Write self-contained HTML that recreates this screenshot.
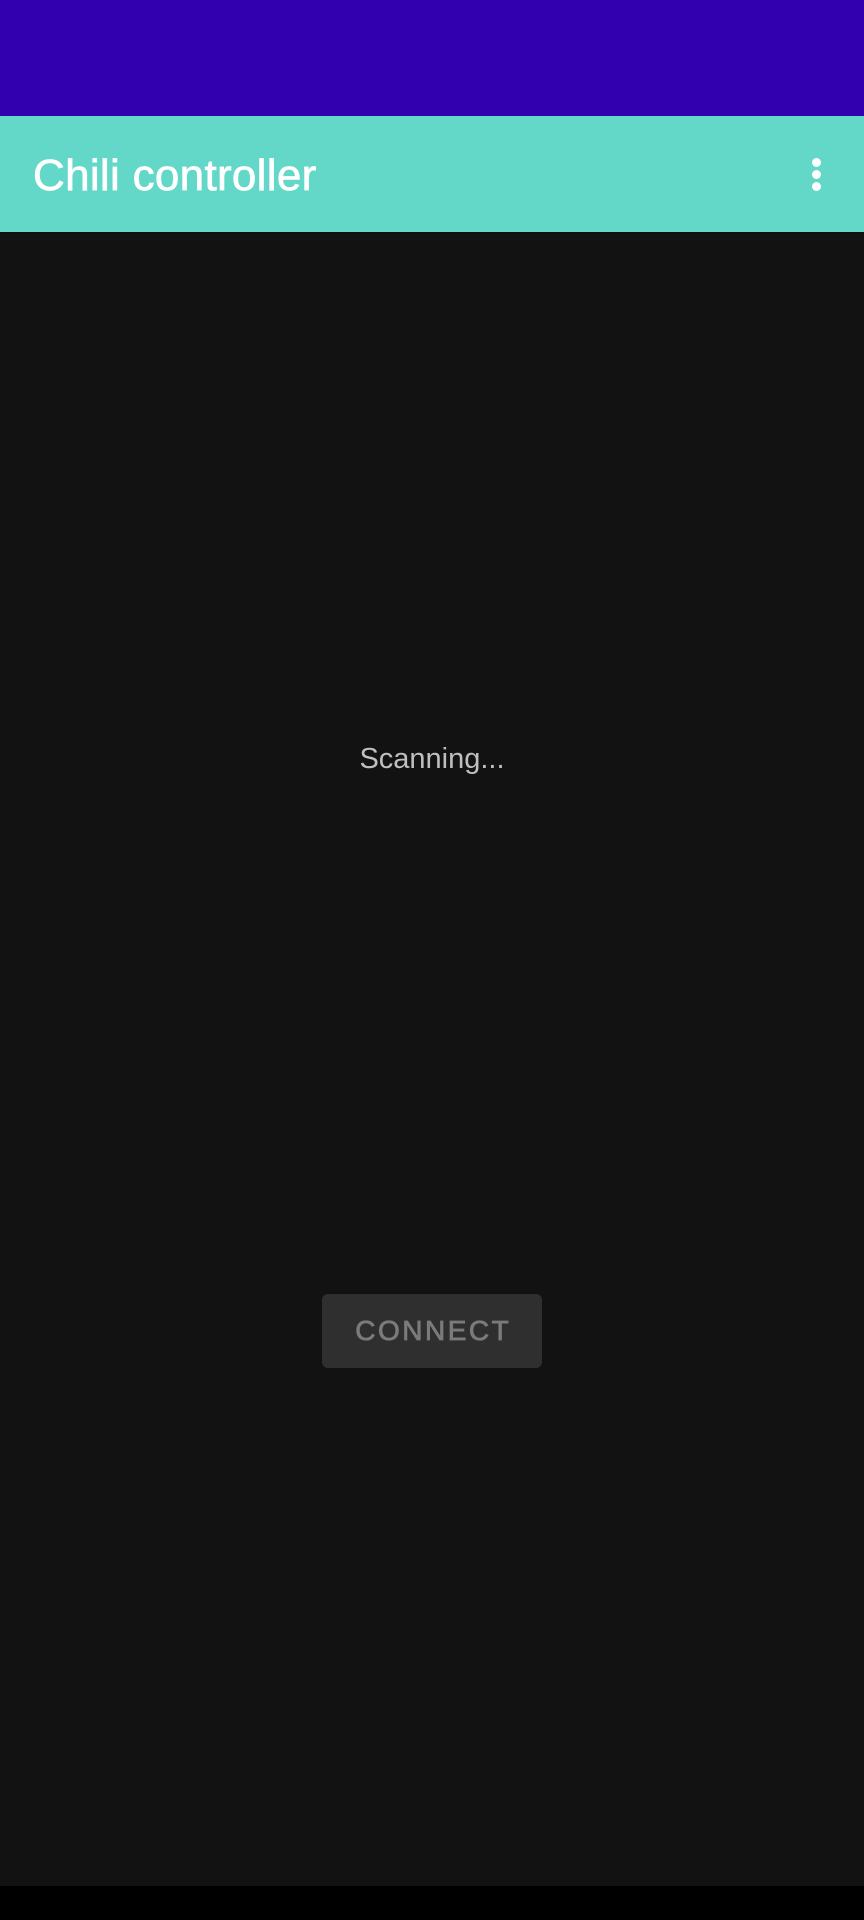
<!DOCTYPE html>
<html><head><style>
html,body{margin:0;padding:0}
body{width:864px;height:1920px;background:#121212;position:relative;overflow:hidden;font-family:"Liberation Sans",sans-serif}
.status{position:absolute;left:0;top:0;width:864px;height:116px;background:#3300b0}
.bar{position:absolute;left:0;top:116px;width:864px;height:116px;background:#64d8c8;box-shadow:0 1px 2px rgba(0,0,0,.4)}
.title{position:absolute;left:33px;top:150px;font-size:44px;line-height:52px;color:#fff;-webkit-text-stroke:0.7px #fff;letter-spacing:0.3px}
.dot{position:absolute;left:812px;width:9px;height:9px;border-radius:50%;background:#fff}
.scan{position:absolute;left:0;width:864px;text-align:center;top:740px;font-size:29px;line-height:38px;color:#bfbfbf}
.btn{position:absolute;left:322px;top:1294px;width:220px;height:74px;border-radius:6px;background:#2f2f2f;color:#7b7b7b;font-size:28px;letter-spacing:2.5px;text-indent:2.5px;-webkit-text-stroke:0.8px #7b7b7b;text-align:center;line-height:74px}
.nav{position:absolute;left:0;top:1886px;width:864px;height:34px;background:#000}
</style></head><body>
<div class="status"></div>
<div class="bar"></div>
<div class="title">Chili controller</div>
<div class="dot" style="top:158px"></div>
<div class="dot" style="top:170px"></div>
<div class="dot" style="top:182px"></div>
<div class="scan">Scanning...</div>
<div class="btn">CONNECT</div>
<div class="nav"></div>
</body></html>
